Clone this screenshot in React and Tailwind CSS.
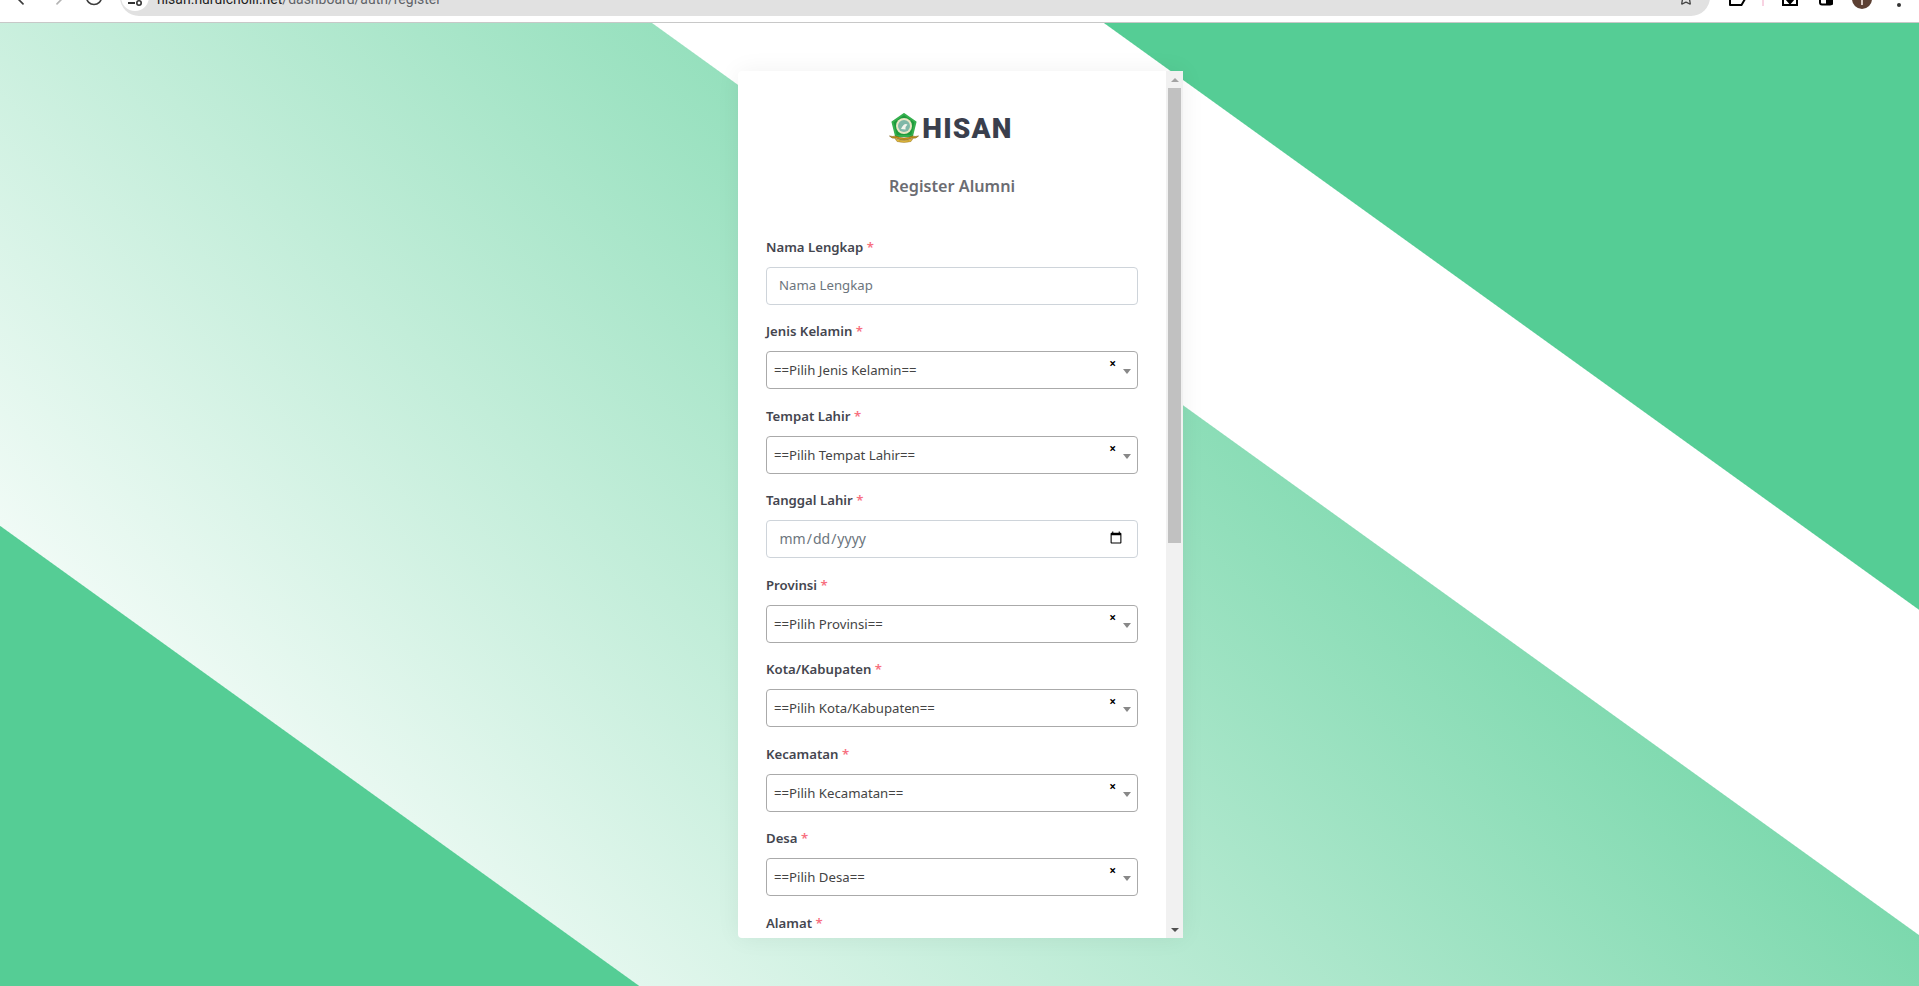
import React from "react";
import { ArrowLeft, ArrowRight, RotateCw, Star } from "lucide-react";

function Label({ text }) {
  return (
    <label className="block h-[21px] mb-[10px] text-[13.2px] leading-[22.4px] font-semibold text-[#44464f]">
      {text} <span className="text-[#f7707f]">*</span>
    </label>
  );
}

function Select2({ text }) {
  return (
    <div className="relative h-[38px] rounded-[4px] border border-[#aaaaaa] bg-white pl-[7px] text-[13.2px] leading-[37px] text-[#444444]">
      {text}
      <span className="absolute right-[21px] top-[5px] text-[12px] leading-[14px] font-bold text-black">×</span>
      <span className="absolute right-[6px] top-[17px] h-0 w-0 border-x-[4px] border-t-[5px] border-x-transparent border-t-[#888888]" />
    </div>
  );
}

function Field({ label, children }) {
  return (
    <div className="mb-[15.5px]">
      <Label text={label} />
      {children}
    </div>
  );
}

const inputCls =
  "block h-[38px] w-full rounded-[4px] border border-[#ced4da] bg-white px-3 pb-[1px] text-[13.2px] text-[#6c757d] placeholder:text-[#6c757d] outline-none";
const dateCls =
  "block h-[38px] w-full rounded-[4px] border border-[#ced4da] bg-white pl-[11.5px] pr-3 pb-[2px] text-[14px] text-[#6c757d] outline-none";

function Emblem() {
  return (
    <svg width="30" height="30" viewBox="0 0 30 30" className="shrink-0">
      <path d="M15 1 L26.5 9 L23 23 L7 23 L3.5 9 Z" fill="#1f9a3c" stroke="#35b04e" strokeWidth="2" strokeLinejoin="round" />
      <circle cx="15" cy="13" r="8" fill="#e9e6c4" />
      <circle cx="15" cy="13" r="6" fill="#7fb8a8" />
      <path d="M12 16 Q15 9.5 18.5 11.5 Q16 13.5 16.5 16.5 Z" fill="#f4f6ee" />
      <path d="M0.5 23 Q3 26 7 25 Q15 29 23 25 Q27 26 29.5 23 Q26 24 23.5 23 Q15 27 6.5 23 Q4 24 0.5 23 Z" fill="#c9971c" stroke="#7c5a10" strokeWidth="0.6" />
      <path d="M6 25.5 Q15 29.5 24 25.5 L22 28.5 Q15 30.5 8 28.5 Z" fill="#e2b93a" stroke="#7c5a10" strokeWidth="0.4" />
    </svg>
  );
}

function Chrome() {
  return (
    <div className="flex h-[23px] items-start overflow-hidden border-b border-[#c8c8c8] bg-white">
      <ArrowLeft size={20} strokeWidth={2} className="ml-[13px] mt-[-12px] shrink-0 text-[#3c3c3c]" />
      <ArrowRight size={20} strokeWidth={2} className="ml-[14px] mt-[-12px] shrink-0 text-[#b4b4b4]" />
      <RotateCw size={20} strokeWidth={2} className="ml-[17px] mt-[-13px] shrink-0 text-[#3c3c3c]" />
      <div className="ml-[16px] mt-[-23px] flex h-[38.5px] w-[1590px] shrink-0 items-center rounded-[19px] bg-[#e1e1e1] pl-[1px] pr-[16px]">
        <div className="mt-[1.5px] flex h-[28px] w-[28px] shrink-0 items-end justify-center rounded-full bg-white pb-[5px]">
          <svg width="16" height="6" viewBox="0 0 16 6">
            <path d="M1 3 H8" stroke="#333" strokeWidth="2" />
            <circle cx="12" cy="3" r="2.2" fill="none" stroke="#333" strokeWidth="1.6" />
          </svg>
        </div>
        <span className="ml-[8px] mt-[5.5px] font-['Roboto',sans-serif] text-[14px] leading-[20px] text-[#5f6368]">
          <span className="text-[#1f1f1f]">hisan.nurulcholil.net</span>/dashboard/auth/register
        </span>
        <Star size={16} strokeWidth={2} className="ml-auto mt-[3.5px] shrink-0 text-[#444444]" />
      </div>
      <svg width="20" height="8" viewBox="0 0 20 8" className="ml-[17px] shrink-0">
        <path d="M3 -2 V5 H14.5 L18 -1" fill="none" stroke="#000" strokeWidth="2" strokeLinejoin="round" />
      </svg>
      <div className="ml-[15px] h-[6px] w-[2px] shrink-0 bg-[#f8d3e2]" />
      <svg width="18" height="20" viewBox="0 0 18 20" className="ml-[17px] mt-[-13px] shrink-0">
        <path d="M2 13 V18 H16 V13" fill="none" stroke="#000" strokeWidth="2" />
        <path d="M9 4 V13 M5.5 12.5 L9 16.5 L12.5 12.5 Z" fill="#000" stroke="#000" strokeWidth="1.6" />
      </svg>
      <svg width="14" height="20" viewBox="0 0 14 20" className="ml-[20px] mt-[-14px] shrink-0">
        <rect x="1" y="3" width="12" height="15.5" rx="2" fill="none" stroke="#000" strokeWidth="2" />
        <rect x="7" y="3" width="7" height="16" rx="1.5" fill="#000" />
      </svg>
      <div className="ml-[19px] mt-[-11px] flex h-[20px] w-[20px] shrink-0 items-end justify-center rounded-full bg-[#5c4033] pb-[4px]">
        <div className="h-[6px] w-[2px] bg-[#d8c8c0]" />
      </div>
      <div className="ml-[25px] mt-[-4px] flex shrink-0 flex-col gap-[3.5px]">
        <div className="h-[3.5px] w-[3.5px] rounded-full bg-[#333333]" />
        <div className="h-[3.5px] w-[3.5px] rounded-full bg-[#333333]" />
      </div>
    </div>
  );
}

export default function App() {
  return (
    <div className="h-[986px] w-full overflow-hidden font-['Noto_Sans',sans-serif]">
      <Chrome />
      <main className="flex h-[963px] justify-center bg-[linear-gradient(35.75deg,#55cd95_373px,transparent_374px,transparent_1162px,#fff_1163px,#fff_1426px,#55cd95_1427px),linear-gradient(45deg,#fff_189px,#55cd95_1749px)] pl-[2px] pt-[48px]">
        <div className="flex h-[867px] w-[445px] overflow-hidden rounded-l-[4px] bg-white shadow-[0_0_24px_rgba(0,0,0,0.06)]">
          <div className="min-w-0 flex-1 overflow-hidden px-[28px] pt-[42px]">
            <div className="flex h-[30px] items-center justify-center gap-[3px] pr-[2px]">
              <Emblem />
              <span className="font-['Roboto',sans-serif] text-[28px] leading-[31px] font-black tracking-[1.2px] text-[#3a3f4d]">
                HISAN
              </span>
            </div>
            <h1 className="mt-[29.5px] h-[27px] text-center text-[16.2px] leading-[27px] font-semibold text-[#6b6c72]">
              Register Alumni
            </h1>
            <form className="mt-[36.3px]">
              <Field label="Nama Lengkap">
                <input type="text" placeholder="Nama Lengkap" className={inputCls} />
              </Field>
              <Field label="Jenis Kelamin"><Select2 text="==Pilih Jenis Kelamin==" /></Field>
              <Field label="Tempat Lahir"><Select2 text="==Pilih Tempat Lahir==" /></Field>
              <Field label="Tanggal Lahir">
                <input type="date" className={dateCls} />
              </Field>
              <Field label="Provinsi"><Select2 text="==Pilih Provinsi==" /></Field>
              <Field label="Kota/Kabupaten"><Select2 text="==Pilih Kota/Kabupaten==" /></Field>
              <Field label="Kecamatan"><Select2 text="==Pilih Kecamatan==" /></Field>
              <Field label="Desa"><Select2 text="==Pilih Desa==" /></Field>
              <Field label="Alamat">
                <input type="text" className={inputCls} />
              </Field>
            </form>
          </div>
          <div className="flex w-[17px] shrink-0 flex-col items-center bg-[#f1f1f1]">
            <div className="flex h-[17px] w-full items-center justify-center">
              <span className="h-0 w-0 border-x-[4px] border-b-[4px] border-x-transparent border-b-[#a3a3a3]" />
            </div>
            <div className="h-[455px] w-[13px] bg-[#c1c1c1]" />
            <div className="flex-1" />
            <div className="flex h-[17px] w-full items-center justify-center">
              <span className="h-0 w-0 border-x-[4px] border-t-[4px] border-x-transparent border-t-[#505050]" />
            </div>
          </div>
        </div>
      </main>
    </div>
  );
}
